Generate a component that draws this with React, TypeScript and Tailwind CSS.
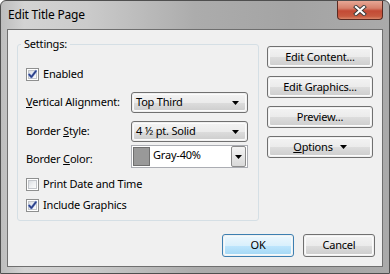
import React from "react";

function Check({ checked }: { checked: boolean }) {
  return (
    <span className="w-[13px] h-[13px] border border-[#8e8f8f] bg-white p-px flex shrink-0 relative">
      <span className="flex-1 border border-[#c3c6cb] bg-[linear-gradient(135deg,#dadde2_0%,#eceef0_45%,#fbfbfb_100%)]" />
      {checked && (
        <svg className="absolute left-0 top-0" width="11" height="11" viewBox="0 0 11 11">
          <path d="M2.2 5.6 L4.4 8 L8.8 2.2" fill="none" stroke="#8aa0d8" strokeWidth="2.6" strokeLinecap="round" strokeLinejoin="round" />
          <path d="M2.2 5.6 L4.4 8 L8.8 2.2" fill="none" stroke="#2c3f86" strokeWidth="1.5" strokeLinecap="round" strokeLinejoin="round" />
        </svg>
      )}
    </span>
  );
}

function Arrow() {
  return (
    <svg width="7" height="4" viewBox="0 0 7 4">
      <polygon points="0,0 7,0 3.5,4" fill="#000" />
    </svg>
  );
}

function Btn({ children, def }: { children: React.ReactNode; def?: boolean }) {
  return (
    <div
      className={
        "h-full rounded-[3px] border p-px " +
        (def ? "border-[#3c7fb1]" : "border-[#707070]")
      }
    >
      <div
        className={
          "h-full rounded-[2px] border flex items-center justify-center text-black whitespace-nowrap " +
          (def
            ? "border-[#f2fafe] bg-[linear-gradient(to_bottom,#eaf6fd_0%,#d9f0fc_50%,#bee6fd_51%,#a7d9f5_100%)]"
            : "border-[#fbfbfb] bg-[linear-gradient(to_bottom,#f2f2f2_0%,#ebebeb_50%,#dddddd_51%,#cfcfcf_100%)]")
        }
      >
        {children}
      </div>
    </div>
  );
}

function Combo({ text }: { text: string }) {
  return (
    <div className="w-[117px] h-[21px] rounded-[3px] border border-[#707070] p-px">
      <div className="h-full rounded-[2px] border border-[#fbfbfb] bg-[linear-gradient(to_bottom,#f2f2f2_0%,#ebebeb_50%,#dddddd_51%,#cfcfcf_100%)] flex items-center pl-[2px] pr-[6px]">
        <span className="flex-1 whitespace-nowrap">{text}</span>
        <Arrow />
      </div>
    </div>
  );
}

export default function App() {
  return (
    <div className="w-[390px] h-[274px] relative border border-[#4f4f4f] rounded-t-[6px] flex flex-col bg-[linear-gradient(to_right,#bdbdbd_0%,#d3d3d3_6%,#cbcbcb_22%,#acacac_50%,#a4a4a4_75%,#aaaaaa_100%)] font-['Noto_Sans',sans-serif] text-[11px] tracking-[-0.2px] text-black overflow-hidden">
      <div className="h-[28px] shrink-0 pl-[7px] pt-[6px] text-[12px] leading-[16px] tracking-[-0.2px]">Edit Title Page</div>
      <div className="absolute right-[6px] top-0 w-[46px] h-[19px] rounded-b-[4px] border border-t-0 border-[#5a2a22] bg-[linear-gradient(to_bottom,#e7a795_0%,#d6806b_40%,#c34a35_55%,#c75a40_85%,#d9876a_100%)] flex items-center justify-center">
        <svg width="14" height="11" viewBox="0 0 14 11">
          <path d="M3 2 L11 9 M11 2 L3 9" stroke="#3b3b3b" strokeWidth="4" strokeLinecap="square" />
          <path d="M3 2 L11 9 M11 2 L3 9" stroke="#ffffff" strokeWidth="2.2" strokeLinecap="square" />
        </svg>
      </div>
      <div className="mx-[6px] mb-[6px] flex-1 border border-[#6f6f6f] bg-[#f0f0f0] flex flex-col">
        <div className="flex pl-[9px]">
          <div className="mt-[14px] w-[242px] h-[177px] border border-[#d5dfe5] rounded-[3px] relative flex flex-col pl-[8px]">
            <span className="absolute left-[3px] -top-[9px] px-[3px] bg-[#f0f0f0] leading-[16px]">Settings:</span>
            <div className="mt-[19px] h-[20px] flex items-center gap-[4px]">
              <Check checked />
              <span>Enabled</span>
            </div>
            <div className="mt-[8px] h-[21px] flex items-center">
              <span className="w-[105px] whitespace-nowrap"><u>V</u>ertical Alignment:</span>
              <Combo text="Top Third" />
            </div>
            <div className="mt-[8px] h-[21px] flex items-center">
              <span className="w-[105px] whitespace-nowrap">Border <u>S</u>tyle:</span>
              <Combo text="4 ½ pt. Solid" />
            </div>
            <div className="mt-[3px] h-[23px] flex items-center">
              <span className="w-[105px] whitespace-nowrap self-end mb-[1px]">Border <u>C</u>olor:</span>
              <div className="w-[117px] h-[23px] border border-[#abadb3] bg-white flex items-center pl-px pr-px">
                <span className="w-[17px] h-[19px] border border-[#6f6f6f] bg-[#999999]" />
                <span className="flex-1 pl-[3px] -mt-[2px] whitespace-nowrap">Gray-40%</span>
                <span className="w-[15px] h-[21px] border border-[#8c8c8c] rounded-[2px] bg-[linear-gradient(to_bottom,#f4f4f4_0%,#e6e6e6_50%,#d9d9d9_100%)] flex items-center justify-center">
                  <Arrow />
                </span>
              </div>
            </div>
            <div className="mt-[7px] h-[18px] flex items-center gap-[4px]">
              <Check checked={false} />
              <span className="whitespace-nowrap">Print Date and Time</span>
            </div>
            <div className="mt-[3px] h-[18px] flex items-center gap-[4px]">
              <Check checked />
              <span className="whitespace-nowrap">Include Graphics</span>
            </div>
          </div>
          <div className="ml-[8px] mt-[16px] w-[106px] flex flex-col gap-[8px]">
            <div className="h-[22px]"><Btn>Edit Content...</Btn></div>
            <div className="h-[22px]"><Btn>Edit Graphics...</Btn></div>
            <div className="h-[22px]"><Btn>Preview...</Btn></div>
            <div className="h-[22px]">
              <Btn>
                <span className="flex items-center gap-[7px]">
                  <span><u>O</u>ptions</span>
                  <Arrow />
                </span>
              </Btn>
            </div>
          </div>
        </div>
        <div className="mt-[13px] flex justify-end gap-[9px] pr-[7px]">
          <div className="w-[72px] h-[23px]"><Btn def>OK</Btn></div>
          <div className="w-[72px] h-[23px]"><Btn>Cancel</Btn></div>
        </div>
      </div>
    </div>
  );
}
